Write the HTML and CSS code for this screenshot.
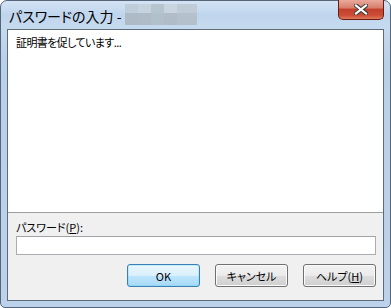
FILE: index.html
```html
<!DOCTYPE html>
<html>
<head>
  <title>パスワードの入力</title>
  <link rel="stylesheet" href="styles.css">
</head>
<body>
  <div class="window">
    <div class="titlebar">
      <span class="title">パスワードの入力 -</span>
      <svg class="mosaic" width="72" height="21" viewBox="0 0 72 21">
        <rect x="0" y="0" width="13" height="9" fill="#bfccd9"/>
        <rect x="13" y="0" width="13" height="9" fill="#c6d2dd"/>
        <rect x="26" y="0" width="13" height="9" fill="#b6c4d0"/>
        <rect x="39" y="0" width="13" height="9" fill="#c9d4df"/>
        <rect x="52" y="0" width="20" height="9" fill="#bfcbd7"/>
        <rect x="0" y="9" width="13" height="12" fill="#aebbc7"/>
        <rect x="13" y="9" width="13" height="12" fill="#afbcc8"/>
        <rect x="26" y="9" width="13" height="12" fill="#b2c0cb"/>
        <rect x="39" y="9" width="13" height="12" fill="#b0bdc9"/>
        <rect x="52" y="9" width="20" height="12" fill="#b4c1cd"/>
      </svg>
      <div class="close">
        <svg width="14" height="11" viewBox="0 0 14 11">
          <path d="M2 1.5 L12 9.5 M12 1.5 L2 9.5" stroke="#3a3a3a" stroke-width="4.2" stroke-linecap="square"/>
          <path d="M2 1.5 L12 9.5 M12 1.5 L2 9.5" stroke="#ffffff" stroke-width="2.2" stroke-linecap="square"/>
        </svg>
      </div>
    </div>
    <div class="client">
      <div class="message">証明書を促しています...</div>
      <div class="form">
        <label class="field-label" for="password">パスワード(<u>P</u>):</label>
        <input type="password" id="password" class="password">
        <div class="buttons">
          <button class="btn default">OK</button>
          <button class="btn">キャンセル</button>
          <button class="btn">ヘルプ(<u>H</u>)</button>
        </div>
      </div>
    </div>
  </div>
</body>
</html>
```

FILE: styles.css
```css
/* dialog window */
body {
  margin: 0;
  background: #ffffff;
  font-family: "Noto Sans CJK JP", "Noto Sans", sans-serif;
}

.window {
  box-sizing: border-box;
  width: 391px;
  height: 308px;
  display: flex;
  flex-direction: column;
  padding: 0 6px 6px 6px;
  border: 1px solid #56667a;
  border-radius: 7px 7px 5px 5px;
  background: linear-gradient(to bottom, #d4e3f4 0, #bfd5ed 14px, #c6daef 26px, #b9d0e9 60px, #bcd2ea 100%);
}

.titlebar {
  height: 28px;
  display: flex;
  align-items: flex-start;
}

.title {
  margin: 5px 0 0 2px;
  font-size: 14px;
  line-height: 20px;
  color: #000;
  font-feature-settings: "palt";
  white-space: pre;
}

.mosaic {
  margin: 3px 0 0 3px;
}

.close {
  margin: -1px 0 0 auto;
  width: 46px;
  height: 20px;
  box-sizing: border-box;
  border: 1px solid #6b1c12;
  border-top: none;
  border-radius: 0 0 5px 5px;
  background: linear-gradient(to bottom, #e9a99b 0, #d8806e 40%, #c3422d 50%, #cc4c34 80%, #e07a5c 100%);
  display: flex;
  align-items: center;
  justify-content: center;
}

.client {
  flex: 1;
  display: flex;
  flex-direction: column;
  border: 1px solid #5d6b7b;
  background: #f0f0f0;
}

.message {
  height: 183px;
  padding: 4px 8px;
  box-sizing: border-box;
  background: #ffffff;
  border-bottom: 1px solid #a0a0a0;
  font-size: 11px;
  line-height: 16px;
  letter-spacing: -0.6px;
  color: #000;
  font-feature-settings: "palt";
}

.form {
  display: flex;
  flex-direction: column;
  padding: 7px 7px 12px 8px;
}

.field-label {
  font-size: 11px;
  line-height: 14px;
  color: #000;
  font-feature-settings: "palt";
}

.password {
  margin-top: 2px;
  height: 19px;
  box-sizing: border-box;
  border: 1px solid #abadb3;
  border-top-color: #a0a2a8;
  background: #ffffff;
  padding: 0 3px;
}

.buttons {
  margin-top: 9px;
  display: flex;
  justify-content: flex-end;
  gap: 15px;
}

.btn {
  width: 73px;
  height: 23px;
  box-sizing: border-box;
  border: 1px solid #707070;
  border-radius: 3px;
  padding: 0;
  background: linear-gradient(to bottom, #f2f2f2 0, #ebebeb 50%, #dddddd 50%, #cfcfcf 100%);
  box-shadow: inset 0 0 0 1px #fbfbfb;
  font-family: "Noto Sans CJK JP", "Noto Sans", sans-serif;
  font-size: 11px;
  line-height: 14px;
  color: #000;
  font-feature-settings: "palt";
}

.btn.default {
  border-color: #3c7fb1;
  background: linear-gradient(to bottom, #eaf6fd 0, #d9f0fc 50%, #bee6fd 50%, #a7d9f5 100%);
  box-shadow: inset 0 0 0 1px #48d5fb40;
}
```
